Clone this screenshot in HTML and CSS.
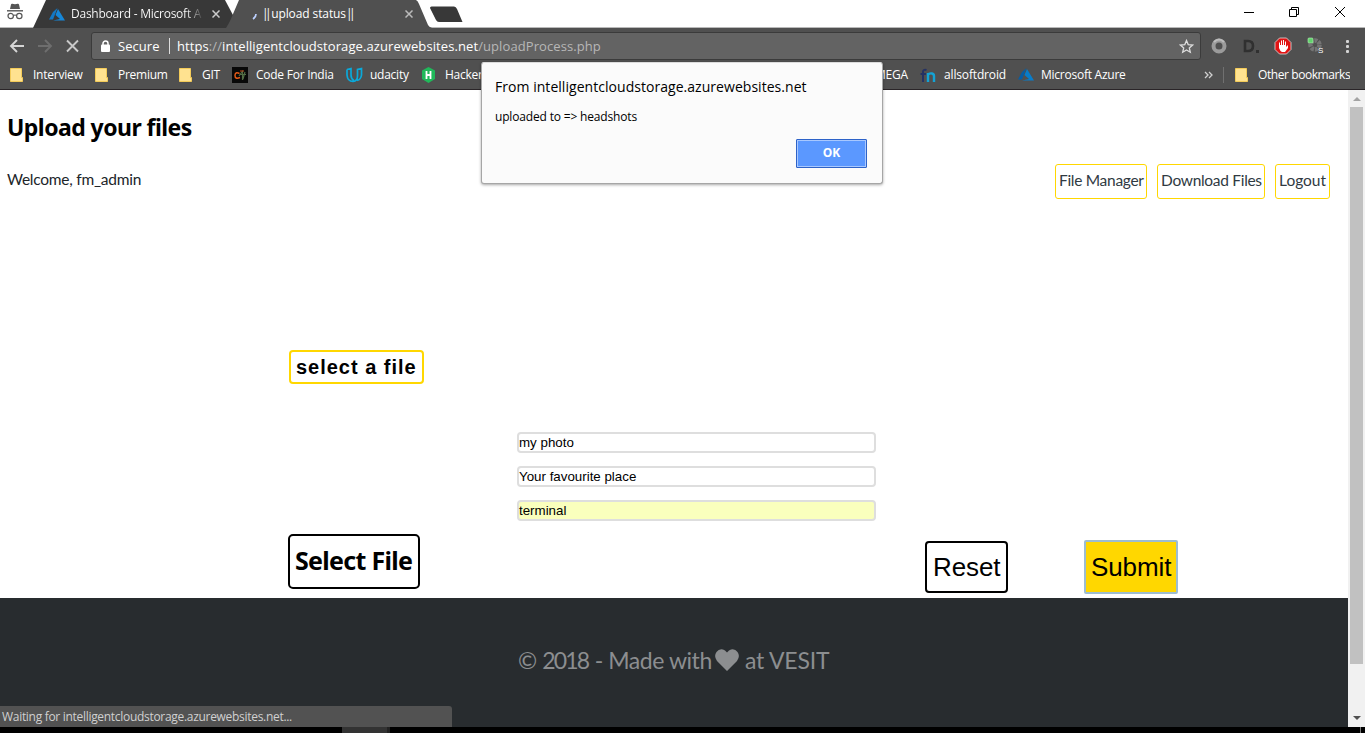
FILE: index.html
```html
<!DOCTYPE html>
<html lang="en">
<head>
<meta charset="utf-8">
<title>||upload status||</title>
<link rel="stylesheet" href="styles.css">
</head>
<body>
<div class="browser">
  <header class="tabstrip">
    <svg class="tab-shapes" width="1365" height="28" viewBox="0 0 1365 28">
      <path d="M0 27.5H1365" stroke="#b9b9b9"/>
      <path d="M33 28L46 0H225L234 17L229 28Z" fill="#383838"/>
      <path d="M226 28L229 23Q231 19 233 14L239 0H416Q418 1 419 4L428 25Q429 27 432 28Z" fill="#505050"/>
      <path d="M431.500 6.500H454Q456 6.500 457 9L462.500 22H439Q437 22 436 20L430 8Q430 6.500 431.500 6.500Z" fill="#383838"/>
    </svg>
    <svg class="incognito" width="18" height="18" viewBox="0 0 18 18">
      <path d="M4 6L5 1.500Q5.300.500 6.300.700L9 1.200L11.700.700Q12.700.500 13 1.500L14 6Z" fill="#555"/>
      <path d="M1 7.800H17" stroke="#555" stroke-width="1.400"/>
      <g fill="none" stroke="#555" stroke-width="1.200"><circle cx="4.700" cy="13" r="2.700"/><circle cx="13.300" cy="13" r="2.700"/><path d="M7.400 12.500Q9 11.500 10.600 12.500"/></g>
    </svg>
    <svg class="tab-azure" width="16" height="13" viewBox="0 0 16 13"><path d="M8.500 0L4 4L0 11.500H4Z" fill="#1478c4"/><path d="M9 1L6.500 7L11 11L4 12.500H16Z" fill="#1687d9"/></svg>
    <span class="tab-title first">Dashboard - Microsoft A</span>
    <svg class="tab-x x1" width="8" height="8" viewBox="0 0 8 8"><path d="M.500.500L7.500 7.500M7.500.500L.500 7.500" stroke="#ccc" stroke-width="1.500"/></svg>
    <svg class="spinner" width="5" height="7" viewBox="0 0 5 7"><path d="M4 1Q4 4 1 6" fill="none" stroke="#bcd0ff" stroke-width="1.700"/></svg>
    <span class="tab-title second"><b>||</b>upload status<b>||</b></span>
    <svg class="tab-x x2" width="8" height="8" viewBox="0 0 8 8"><path d="M.500.500L7.500 7.500M7.500.500L.500 7.500" stroke="#bbb" stroke-width="1.500"/></svg>
    <svg class="window-controls" width="104" height="14" viewBox="0 0 104 14">
      <g fill="none" stroke="#000"><path d="M0 7.500H10M45.500 4.500H52.500V11.500H45.500ZM47.500 4V2.500H54.500V9.500H53M91 2L101 12M101 2L91 12"/></g>
    </svg>
  </header>

  <div class="toolbar">
    <svg class="nav-icons" width="72" height="14" viewBox="0 0 72 14">
      <g fill="none" stroke-width="1.900"><path d="M15 7H2M8 1L2 7L8 13" stroke="#d5d5d5"/><path d="M29 7H42M36 1L42 7L36 13" stroke="#6e6e6e"/><path d="M58 1.500L69 12.500M69 1.500L58 12.500" stroke="#c8c8c8"/></g>
    </svg>
    <div class="omnibox">
      <svg width="9" height="12" viewBox="0 0 9 12"><path d="M2 6V3.500A2.500 2.500 0 0 1 7 3.500V6" fill="none" stroke="#fff" stroke-width="1.500"/><rect y="4.500" width="9" height="7.500" rx="1" fill="#fff"/></svg>
      <span class="secure">Secure</span>
      <span class="url">https<i>://</i>intelligentcloudstorage.azurewebsites.net<i>/uploadProcess.php</i></span>
      <svg class="star" width="15" height="15" viewBox="0 0 15 15"><path d="M7.500 1.500L9.200 5.600L13.600 6L10.300 8.900L11.300 13.200L7.500 10.900L3.700 13.200L4.700 8.900L1.400 6L5.800 5.600Z" fill="none" stroke="#ddd" stroke-width="1.300"/></svg>
    </div>
    <svg class="extensions" width="150" height="20" viewBox="0 0 150 20">
      <circle cx="8" cy="10" r="5.500" fill="none" stroke="#9b9b9b" stroke-width="4"/><path d="M3 6Q8 1 13 6" fill="none" stroke="#bcbcbc" stroke-width="2"/>
      <path d="M34 5H37Q42 5 42 10T37 15H34Z" fill="none" stroke="#303030" stroke-width="2.600"/><rect x="45" y="14" width="3" height="3" fill="#303030"/>
      <path d="M68.500 2H75.500L80 6.500V13.500L75.500 18H68.500L64 13.500V6.500Z" fill="#e01414" stroke="#ddd" stroke-width=".8"/>
      <path d="M68 8V12Q69 15 71 16H74L77 12V9L75 11V5.500H74V9H73V4H72V9H71V4.500H70V9H69V6.500H68Z" fill="#fff"/>
      <circle cx="104" cy="9" r="4.500" fill="none" stroke="#747474" stroke-width="4.500" stroke-dasharray="3 1"/><rect x="97" y="2" width="5" height="5" rx="1" fill="#62d26c" stroke="#b6f4b9" stroke-width=".6"/><text x="107" y="17" class="ext-s">S</text>
      <g fill="#d5d5d5"><rect x="135" y="4" width="3" height="3" rx="1"/><rect x="135" y="9" width="3" height="3" rx="1"/><rect x="135" y="14" width="3" height="3" rx="1"/></g>
    </svg>
  </div>

  <nav class="bookmarks">
    <span class="bm b-interview"><svg class="folder" width="13" height="14" viewBox="0 0 13 14"><path d="M.500.500H11.500V9.500H12.500V13.500H.500Z" fill="#ffe290" stroke="#f3cb59"/></svg><b>Interview</b></span>
    <span class="bm b-premium"><svg class="folder" width="13" height="14" viewBox="0 0 13 14"><path d="M.500.500H11.500V9.500H12.500V13.500H.500Z" fill="#ffe290" stroke="#f3cb59"/></svg><b>Premium</b></span>
    <span class="bm b-git"><svg class="folder" width="13" height="14" viewBox="0 0 13 14"><path d="M.500.500H11.500V9.500H12.500V13.500H.500Z" fill="#ffe290" stroke="#f3cb59"/></svg><b>GIT</b></span>
    <span class="bm b-code"><svg width="16" height="16" viewBox="0 0 16 16"><path fill="#080808" d="M0 0H16V16H0Z"/><path d="M7.500 6.500Q3 4.500 3 8.500T8 10.500" fill="none" stroke="#e65b18" stroke-width="1.500"/><path d="M7 9L11 3.500M10.500 3.500V13M8 7.500H14M13 5L11 12" fill="none" stroke="#526c44" stroke-width="1.200"/><path d="M8 4L12 4" stroke="#c24b1c"/></svg><b>Code For India</b></span>
    <span class="bm b-udacity"><svg width="17" height="16" viewBox="0 0 17 16"><path d="M1 2.500L5 1.500V8Q5 12 8 13.500M1 2.500V8Q1.500 14.500 7 14.500Q11.500 14 11.500 9V2.500L15.500 1.500V8Q15 12.500 11 13.500" fill="none" stroke="#0aa9da" stroke-width="1.700"/></svg><b>udacity</b></span>
    <span class="bm b-hacker"><svg width="15" height="16" viewBox="0 0 15 16"><path d="M7.500 0L14 3.500V12L7.500 16L1 12V3.500Z" fill="#20b85a"/><path d="M5.500 4V12M9.500 4V12M5 8H10" stroke="#fff" stroke-width="1.800"/></svg><b>Hacker</b></span>
    <span class="bm b-mega"><b>MEGA</b></span>
    <span class="bm b-all"><svg width="16" height="16" viewBox="0 0 16 16"><path d="M6.500 3Q3 2 3 5V15M.500 7H6" fill="none" stroke="#253263" stroke-width="2"/><path d="M8 15V6M8 8Q9 6 12 6.500Q14 7 14 9V15" fill="none" stroke="#14a3d5" stroke-width="2.400"/></svg><b>allsoftdroid</b></span>
    <span class="bm b-azure"><svg width="16" height="13" viewBox="0 0 16 13"><path d="M8.500 0L4 4L0 11.500H4Z" fill="#075da4"/><path d="M9 1L6.500 7L11 11L4 12.500H16Z" fill="#087cc9"/></svg><b>Microsoft Azure</b></span>
    <svg class="overflow" width="9" height="8" viewBox="0 0 9 8"><path d="M1 1L4 4L1 7M5 1L8 4L5 7" fill="none" stroke="#d0d0d0" stroke-width="1.300"/></svg>
    <span class="divider"></span>
    <span class="bm b-other"><svg class="folder" width="13" height="14" viewBox="0 0 13 14"><path d="M.500.500H11.500V9.500H12.500V13.500H.500Z" fill="#ffe290" stroke="#f3cb59"/></svg><b>Other bookmarks</b></span>
  </nav>

  <div class="viewport">
    <div class="page">
      <main>
        <h1><span>Upload your files</span></h1>
        <div class="user-row">
          <span class="welcome">Welcome, fm_admin</span>
          <a class="link manager"><span>File Manager</span></a><a class="link download"><span>Download Files</span></a><a class="link logout"><span>Logout</span></a>
        </div>
        <div class="chosen">select a file</div>
        <form class="form">
          <div class="fields"><div class="field">my photo</div><div class="field">Your favourite place</div><div class="field autofill">terminal</div></div>
          <div class="actions"><div class="choose"><span>Select File</span></div><div class="reset">Reset</div><div class="submit">Submit</div></div>
        </form>
      </main>
      <footer><span class="f1">© <span class="year">2018</span> - Made with</span><svg width="24" height="22" viewBox="0 0 24 22"><path d="M12 22L2 12Q-1.500 7 1.500 3Q4-.500 8 .500Q10 1 12 3.500Q14 1 16 .500Q20-.500 22.500 3Q25.500 7 22 12Z" fill="#8c8e90"/></svg><span class="f2">at VESIT</span></footer>
    </div>
    <div class="scrollbar"><i class="up"></i><i class="thumb"></i><i class="down"></i></div>
    <div class="status">Waiting for intelligentcloudstorage.azurewebsites.net...</div>
  </div>
  <div class="taskbar"><i></i><i class="app"></i><i class="edge"></i></div>

  <section class="dialog">
    <div class="dialog-title">From intelligentcloudstorage.azurewebsites.net</div>
    <div class="dialog-message">uploaded to =&gt; headshots</div>
    <div class="ok">OK</div>
  </section>
</div>
</body>
</html>
```
FILE: styles.css
```css
* { box-sizing: border-box; }
body { margin: 0; overflow: hidden; background: #fff; font-family: "Open Sans", "Noto Sans", sans-serif; color: #000; }
svg { display: block; flex: none; }
span { white-space: nowrap; }
.browser { position: relative; width: 1365px; height: 733px; display: flex; flex-direction: column; }
.tabstrip { position: relative; height: 28px; display: flex; align-items: flex-start; }
.tab-shapes { position: absolute; left: 0; top: 0; }
.tabstrip > :not(.tab-shapes) { position: relative; flex: none; }
.incognito { margin: 3px 0 0 6px; }
.tab-azure { margin: 8px 0 0 25px; }
.tab-title { color: #fff; font-size: 12px; line-height: 28px; }
.tab-title.first { margin-left: 6px; width: 132px; overflow: hidden; letter-spacing: -.24px; background: linear-gradient(90deg, #fff 115px, #555 130px); background-clip: text; color: transparent; }
.x1 { margin: 10px 0 0 9px; }
.spinner { margin: 13px 0 0 32px; }
.second { width: 130px; margin-left: 5px; letter-spacing: -.1px; }
.second b { font-weight: 400; letter-spacing: -3.5px; margin-right: 3px; }
.second b + b { margin-right: 0; }
.x2 { margin: 10px 0 0 13px; }
.window-controls { margin: 5px 0 0 831px; }

.toolbar { height: 32px; background: #505050; display: flex; align-items: center; }
.nav-icons { margin-left: 9px; margin-top: 4px; }
.omnibox { width: 1110px; height: 28px; margin: 4px 0 0 10px; background: #636363; border: 1px solid #3b3b3b; border-radius: 3px; display: flex; align-items: center; padding-left: 9px; color: #fff; }
.secure { font-size: 13px; width: 52px; margin-left: 8px; line-height: 16px; border-right: 1px solid #ddd; letter-spacing: .05px; }
.url { width: 1002px; margin-left: 7px; font-size: 13px; letter-spacing: .09px; line-height: 20px; }
.url i { font-style: normal; color: #b7b7b7; }
.extensions { margin: 4px 0 0 10px; }
.ext-s { font: 8px "Liberation Sans", sans-serif; fill: #fff; }

.bookmarks { height: 30px; background: #505050; border-bottom: 1px solid #2a2528; display: flex; align-items: center; padding-left: 9px; }
.bm { display: flex; align-items: center; flex: none; font-size: 12px; color: #fff; letter-spacing: -.25px; overflow: hidden; }
.bm b { font-weight: 400; line-height: 20px; }
.folder { margin-left: 1px; margin-right: 10px; }
.b-interview { width: 85px; }
.b-premium { width: 84px; }
.b-git { width: 54px; }
.b-code { width: 114px; }
.b-code svg { margin-right: 8px; }
.b-udacity { width: 75px; }
.b-udacity svg { margin-right: 7px; }
.b-hacker { width: 454px; }
.b-hacker svg { margin-right: 9px; }
.b-mega { width: 45px; }
.b-all { width: 98px; letter-spacing: -.15px; }
.b-all svg { margin-right: 8px; }
.b-azure { width: 186px; }
.b-azure svg { margin-right: 7px; }
.overflow { margin-right: 10px; }
.divider { width: 1px; height: 16px; background: #707070; margin-right: 10px; }
.b-other { letter-spacing: -.42px; }

.viewport { position: relative; height: 637px; display: flex; }
.page { width: 1348px; }
main { height: 508px; padding: 17px 18px 0 7px; }
h1 { margin: 0; font: 700 23px/41px "Noto Sans", sans-serif; letter-spacing: -.55px; height: 42px; }
.user-row { display: flex; margin-top: 15px; height: 35px; font: 15.5px/31px Lato, "Noto Sans", sans-serif; }
.welcome { width: 1048px; color: #212529; letter-spacing: -.25px; }
.link { height: 35px; border: 1px solid #ffd700; border-radius: 3px; padding-left: 3px; color: #303a42; flex: none; letter-spacing: -.3px; }
.manager { width: 92px; }
.download { width: 108px; margin: 0 10px; }
.logout { width: 55px; letter-spacing: 0; }
.chosen { margin: 151px 0 0 282px; width: 135px; height: 34px; border: 2px solid #ffd700; border-radius: 4px; padding-left: 5px; font: 700 20px/30px "Liberation Sans", sans-serif; letter-spacing: .98px; white-space: nowrap; }
.form { margin-top: 48px; }
.fields { display: flex; flex-direction: column; gap: 13px; margin-left: 510px; width: 359px; }
.field { height: 21px; border: 2px solid #dedede; border-radius: 4px; font: 13.333px/17px "Liberation Sans", sans-serif; }
.autofill { background: #faffbd; }
.actions { margin: 13px 0 0 281px; display: flex; }
.choose { width: 132px; height: 55px; border: 2px solid #000; border-radius: 5px; padding-left: 5px; font: 700 25px/48px "Noto Sans", sans-serif; letter-spacing: -.7px; }
.reset { width: 83px; height: 52px; margin: 7px 0 0 505px; border: 2px solid #000; border-radius: 4px; padding-left: 6px; font: 26px/48px "Liberation Sans", sans-serif; letter-spacing: -.1px; }
.submit { width: 94px; height: 54px; margin: 6px 0 0 76px; border: 2px solid #9dbdd0; border-radius: 2px; background: #ffd700; padding-left: 5px; font: 26px/50px "Liberation Sans", sans-serif; letter-spacing: -.1px; }
footer { height: 129px; background: #282c2f; color: #8c8e90; display: flex; padding-left: 518px; font: 23px/125px Lato, "Noto Sans", sans-serif; letter-spacing: -.45px; }
footer svg { margin: 51px 6px 0; }
.f1 { width: 191px; }
.year { letter-spacing: -1.8px; margin-right: 1px; }
.f2 { letter-spacing: -.2px; }
.scrollbar { width: 17px; background: #f1f1f1; display: flex; flex-direction: column; align-items: center; }
.up { border: 4px solid transparent; border-top: 0; border-bottom-color: #a3a3a3; margin-top: 7px; }
.thumb { width: 13px; height: 557px; background: #c1c1c1; margin-top: 6px; }
.down { border: 4px solid transparent; border-bottom: 0; border-top-color: #505050; margin-top: 52px; }
.status { position: absolute; left: 0; bottom: 0; width: 452px; height: 21px; background: #525252; color: #d0d0d0; font-size: 12px; line-height: 21px; padding-left: 2px; border-top-right-radius: 3px; letter-spacing: -.3px; white-space: nowrap; }
.taskbar { height: 6px; background: #000; display: flex; }
.taskbar i { width: 342px; }
.taskbar .app { width: 48px; background: #333; border-right: 3px solid #222; }
.taskbar .edge { width: 971px; border-right: 1px solid #777; }

.dialog { position: absolute; left: 481px; top: 62px; width: 402px; height: 122px; background: #fbfbfb; border: 1px solid #a6a6a6; border-top-color: #ddd; border-radius: 3px; box-shadow: 0 1px 3px rgba(0,0,0,.35); padding: 13px 15px 0 13px; white-space: nowrap; }
.dialog-title { font-size: 14px; line-height: 22px; letter-spacing: .04px; }
.dialog-message { font-size: 12px; line-height: 18px; margin-top: 10px; letter-spacing: -.17px; }
.ok { width: 71px; height: 29px; margin: 13px 0 0 auto; border: 1px solid #2d62c8; box-shadow: inset 0 0 0 1px #a8c8ff; background: #5b98ff; border-radius: 1px; color: #fff; font-size: 12px; font-weight: 700; line-height: 26px; text-align: center; }
```
